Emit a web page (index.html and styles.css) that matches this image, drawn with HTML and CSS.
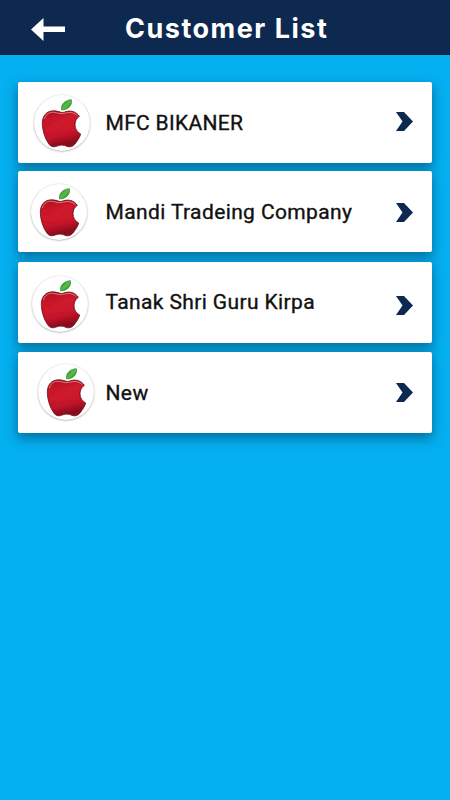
FILE: index.html
```
<!DOCTYPE html>
<html lang="en">
<head>
<meta charset="utf-8">
<title>Customer List</title>
<link rel="stylesheet" href="styles.css">
</head>
<body>
<svg class="defs" aria-hidden="true">
  <defs>
    <linearGradient id="red" x1="0" y1="0" x2="0.25" y2="1">
      <stop offset="0" stop-color="#a51322"/>
      <stop offset="0.3" stop-color="#c91628"/>
      <stop offset="0.75" stop-color="#c5142a"/>
      <stop offset="1" stop-color="#8a0b1c"/>
    </linearGradient>
    <linearGradient id="green" x1="0" y1="0" x2="1" y2="1">
      <stop offset="0" stop-color="#207b22"/>
      <stop offset="0.5" stop-color="#58bd42"/>
      <stop offset="1" stop-color="#21832a"/>
    </linearGradient>
    <symbol id="apple" viewBox="0 0 171 171">
      <path d="M86 45C82 27 98 15 115 14C119 31 105 44 86 45Z" fill="url(#green)" stroke="#25852a" stroke-width="2"/>
      <path d="M84 52C74 48 62 46 51 49C36 53 27 68 28 88C29 108 36 131 47 146C53 155 61 157 70 154C82 149 91 149 102 154C115 159 124 151 131 140C136 133 141 125 143 117C132 111 126 101 126 89C126 78 131 69 139 64C131 52 117 46 103 49C96 50 90 54 84 52Z" fill="url(#red)" stroke="#6d1018" stroke-width="2.5"/>
      <path d="M34 72C38 60 44 55 53 52C65 50 76 56 85 56C95 56 101 52 111 52C120 53 128 57 133 62" fill="none" stroke="#eba5a6" stroke-width="2"/>
      <path d="M34 97C55 93 75 77 105 63C117 60 125 62 130 66C121 76 120 96 128 108C111 102 65 114 37 111Z" fill="#e12a36" opacity=".22"/>
    </symbol>
    <symbol id="chevron" viewBox="0 0 17 19">
      <path d="M0 0H8L17 9.5L8 19H0L6.5 9.5Z" fill="#0e2950"/>
    </symbol>
  </defs>
</svg>
<header class="bar">
  <svg class="back" viewBox="0 0 34 23"><path d="M12.5 0V8.5H34V14H12.5V23L0 11.5Z" fill="#fff"/></svg>
  <h1 class="title">Customer List</h1>
</header>
<main class="list">
  <div class="card first">
    <span class="avatar"><svg><use href="#apple"/></svg></span>
    <span class="name">MFC BIKANER</span>
    <svg class="chevron"><use href="#chevron"/></svg>
  </div>
  <div class="card second">
    <span class="avatar"><svg><use href="#apple"/></svg></span>
    <span class="name">Mandi Tradeing Company</span>
    <svg class="chevron"><use href="#chevron"/></svg>
  </div>
  <div class="card third">
    <span class="avatar"><svg><use href="#apple"/></svg></span>
    <span class="name">Tanak Shri Guru Kirpa</span>
    <svg class="chevron"><use href="#chevron"/></svg>
  </div>
  <div class="card fourth">
    <span class="avatar"><svg><use href="#apple"/></svg></span>
    <span class="name">New</span>
    <svg class="chevron"><use href="#chevron"/></svg>
  </div>
</main>
</body>
</html>
```
FILE: styles.css
```
* { box-sizing: border-box; }
body {
  margin: 0;
  min-height: 800px;
  background: #05b0f1;
  font-family: Roboto, "Liberation Sans", sans-serif;
}
.defs { display: block; width: 0; height: 0; }
.bar {
  display: flex;
  align-items: center;
  height: 55px;
  padding: 3px 0 0 31px;
  background: #0e2950;
  border-bottom: 1px solid #071c43;
}
.back { width: 34px; height: 23px; margin-top: 2px; }
.title {
  margin: 1px 0 0 60px;
  color: #fff;
  font: 700 27px/32px Inter, sans-serif;
  letter-spacing: 1.5px;
  white-space: nowrap;
}
.list { padding: 27px 18px 0; }
.card {
  display: grid;
  grid-template-columns: 87.5px 1fr 17px;
  align-items: center;
  height: 81px;
  margin-bottom: 9px;
  padding-right: 19px;
  background: #fff;
  border-radius: 2px;
  box-shadow: 0 5px 12px 1px rgba(0, 55, 85, .5);
}
.first { margin-bottom: 8px; }
.second { margin-bottom: 9.5px; }
.avatar {
  width: 56px;
  height: 56px;
  margin-left: 15.5px;
  border-radius: 50%;
  background: #fff;
  box-shadow: 0 .5px 2px rgba(0, 0, 0, .38);
}
.avatar svg { display: block; width: 57px; height: 57px; margin-left: -.5px; }
.second .avatar { margin-left: 13px; }
.third .avatar { margin: 4px 0 0 14px; }
.fourth .avatar { margin-left: 20px; }
.name {
  color: #111;
  font-size: 21px;
  font-weight: 400;
  line-height: 28px;
  letter-spacing: .38px;
  -webkit-text-stroke: .35px #111;
  white-space: nowrap;
}
.first .name { letter-spacing: .3px; }
.fourth .name { padding-top: 1px; }
.chevron { display: block; width: 17px; height: 19px; }
.first .chevron { margin-bottom: 3px; }
.second .chevron { margin-top: 2px; }
.third .chevron { margin-top: 7px; }
.fourth .chevron { margin-top: 1px; }
```
